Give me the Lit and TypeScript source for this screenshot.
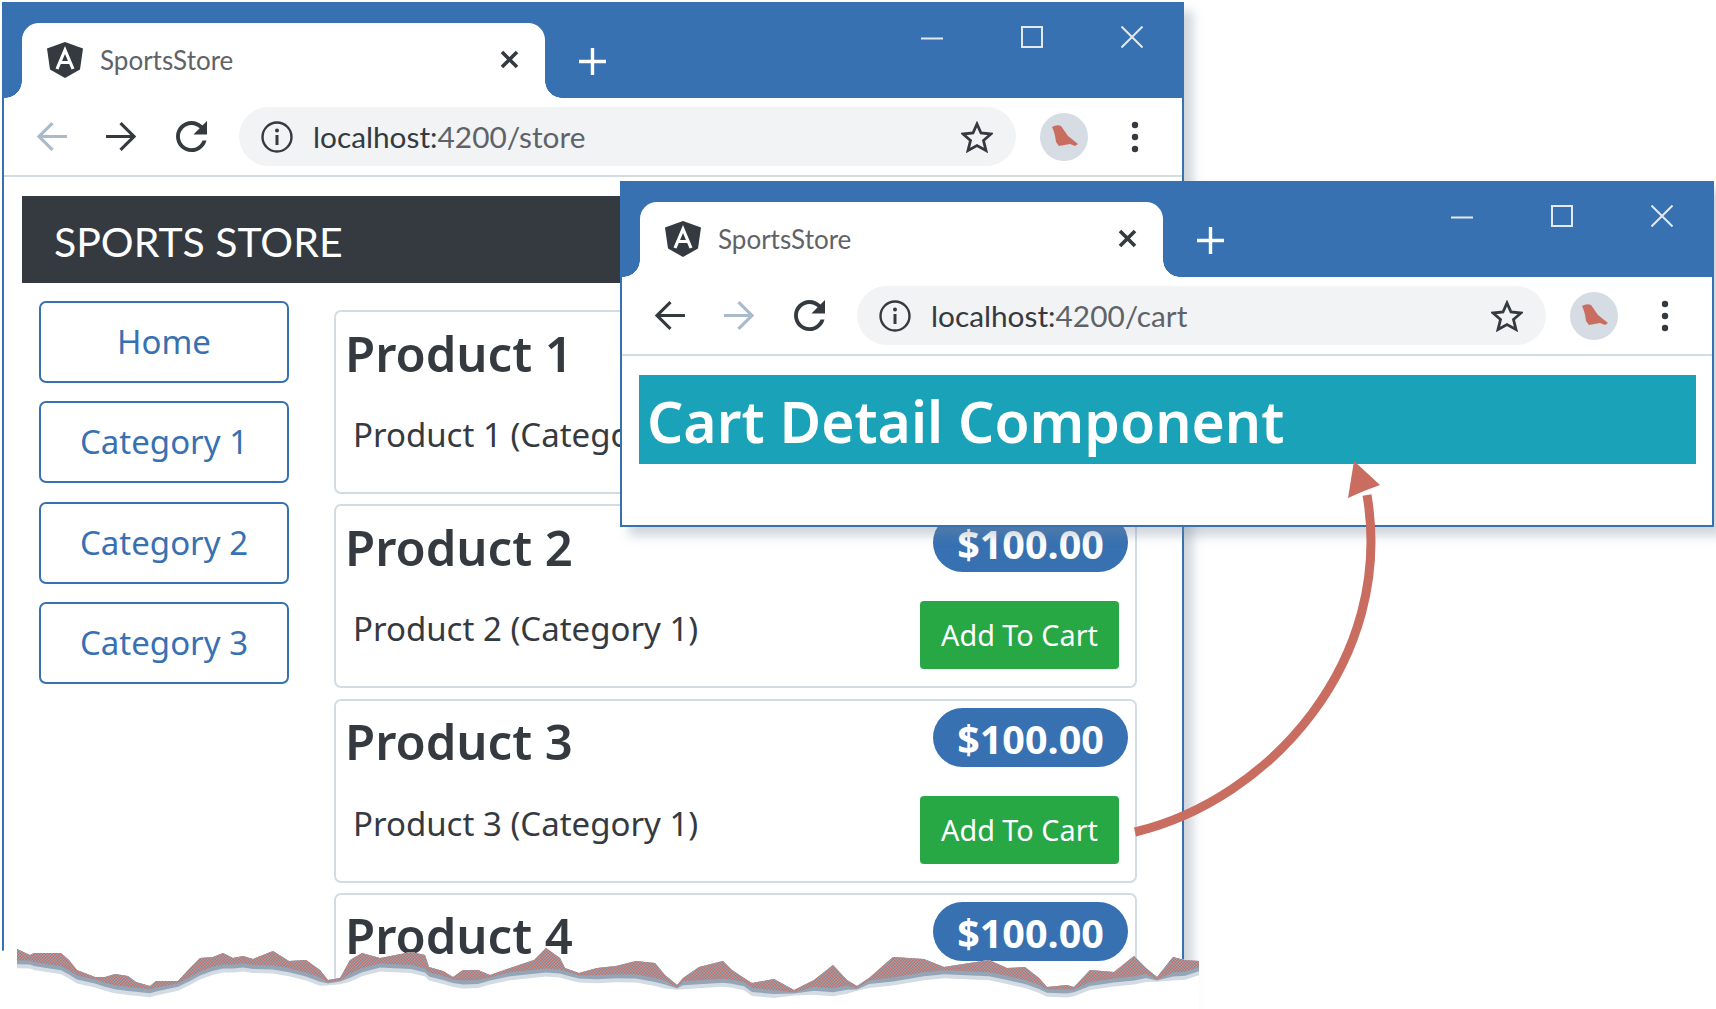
import { LitElement, html, css, svg } from "lit";
import { customElement, property } from "lit/decorators.js";

const TORN: number[][] = [
  [17, 949], [30, 955], [34, 953], [61, 953], [69, 960], [77, 970], [95, 977], [105, 977], [115, 974], [128, 976],
  [136, 982], [150, 986], [156, 981], [178, 981], [190, 968], [200, 958], [213, 957], [223, 953], [233, 958],
  [243, 956], [253, 959], [273, 951], [289, 961], [306, 960], [320, 970], [328, 980], [340, 978], [350, 960],
  [362, 953], [380, 958], [411, 952], [425, 955], [429, 967], [443, 971], [453, 977], [463, 970], [478, 970],
  [490, 975], [510, 968], [534, 960], [546, 948], [560, 958], [565, 968], [579, 973], [597, 968], [616, 966],
  [636, 961], [655, 963], [665, 975], [677, 985], [683, 978], [699, 967], [723, 961], [732, 970], [744, 978],
  [752, 983], [774, 979], [794, 990], [814, 980], [833, 965], [847, 980], [857, 986], [869, 978], [893, 957],
  [924, 959], [944, 967], [989, 960], [1007, 968], [1025, 967], [1039, 978], [1047, 987], [1067, 985],
  [1074, 987], [1090, 970], [1114, 972], [1134, 956], [1146, 968], [1157, 977], [1173, 957], [1185, 960], [1199, 961],
];

// smoothed lower edge of the paper tear, so the shading is thicker under the peaks
function lowerEdge(offset: number) {
  return TORN.map(([x, y], i) => {
    const near = TORN.slice(Math.max(0, i - 2), i + 3);
    const avg = near.reduce((sum, p) => sum + p[1], 0) / near.length;
    return [x, Math.max(y + offset * 0.3, avg + offset)];
  });
}

const band = (offset: number) =>
  [...TORN, ...lowerEdge(offset).reverse()].map((p) => p.join(",")).join(" ");

@customElement("browser-window")
class BrowserWindow extends LitElement {
  @property() url = "";
  @property({ type: Boolean }) forward = false;

  static styles = css`
    :host {
      display: flex;
      flex-direction: column;
      box-sizing: border-box;
      background: #fff;
      border: solid #3771b2;
      border-width: 0 2px 2px 2px;
      box-shadow: 9px 9px 10px rgba(120, 138, 155, 0.35);
      font-family: Lato, "Noto Sans", sans-serif;
    }
    .strip {
      display: flex;
      height: 96px;
      flex: none;
      background: #3771b2;
      margin: 0 -2px;
      padding-left: 20px;
      box-sizing: border-box;
    }
    .tab {
      position: relative;
      align-self: flex-end;
      width: 523px;
      height: 75px;
      box-sizing: border-box;
      background: #fff;
      border-radius: 17px 17px 0 0;
      display: flex;
      align-items: center;
      padding: 0 26px 2px 25px;
      color: #5f6368;
      font-size: 26px;
    }
    .tab::before,
    .tab::after {
      content: "";
      position: absolute;
      bottom: 0;
      width: 17px;
      height: 17px;
    }
    .tab::before {
      left: -17px;
      background: radial-gradient(circle at 0 0, transparent 16.5px, #fff 17px);
    }
    .tab::after {
      right: -17px;
      background: radial-gradient(circle at 100% 0, transparent 16.5px, #fff 17px);
    }
    .logo {
      width: 36px;
      height: 36px;
      margin-right: 17px;
    }
    .title {
      flex: 1;
    }
    .tab-close {
      width: 19px;
      height: 19px;
    }
    .plus {
      width: 27px;
      height: 27px;
      margin: 46px 0 0 34px;
    }
    .controls {
      display: flex;
      margin-left: auto;
      padding: 24px 41px 0 0;
      align-items: flex-start;
      gap: 78px;
    }
    .controls svg {
      width: 22px;
      height: 22px;
    }
    .toolbar {
      display: flex;
      flex: none;
      align-items: center;
      height: 79px;
      box-sizing: border-box;
      border-bottom: 2px solid #d3dbe3;
      padding: 0 43px 0 33px;
    }
    .nav {
      width: 31px;
      height: 31px;
      margin-right: 37px;
    }
    .nav.fwd {
      margin-right: 40px;
    }
    .nav.reload {
      margin-right: 32px;
    }
    .omni {
      flex: 1;
      height: 59px;
      display: flex;
      align-items: center;
      box-sizing: border-box;
      padding: 0 23px 0 22px;
      border-radius: 30px;
      background: #f1f3f5;
      font-size: 29.8px;
      color: #5f6368;
    }
    .info {
      width: 32px;
      height: 32px;
      margin-right: 20px;
    }
    .url {
      flex: 1;
    }
    .url b {
      font-weight: 400;
      color: #343a40;
    }
    .star {
      width: 32px;
      height: 32px;
    }
    .avatar {
      width: 48px;
      height: 48px;
      margin: 0 43px 0 24px;
    }
    .kebab {
      width: 8px;
      height: 32px;
    }
    .body {
      flex: 1;
      min-height: 0;
    }
  `;

  render() {
    const dark = "#343a40";
    const pale = "#a9bacb";
    return html`
      <div class="strip">
        <div class="tab">
          <svg class="logo" viewBox="0 0 36 36">
            <path d="M18 0 36 6.5 33 27.5 18 36 3 27.5 0 6.5Z" fill="${dark}" />
            <path d="M10 27 18 8 26 27M13 20.5H23" fill="none" stroke="#fff" stroke-width="3.2" />
          </svg>
          <span class="title">SportsStore</span>
          <svg class="tab-close" viewBox="0 0 19 19">
            <path d="M2 2 17 17M17 2 2 17" stroke="${dark}" stroke-width="3.6" />
          </svg>
        </div>
        <svg class="plus" viewBox="0 0 27 27">
          <path d="M13.5 0V27M0 13.5H27" stroke="#fff" stroke-width="3.4" />
        </svg>
        <div class="controls">
          <svg viewBox="0 0 22 22"><path d="M0 12.5H22" stroke="#e3e9ef" stroke-width="2" /></svg>
          <svg viewBox="0 0 22 22"><rect x="1" y="1" width="20" height="20" fill="none" stroke="#e3e9ef" stroke-width="2" /></svg>
          <svg viewBox="0 0 22 22"><path d="M0.5 0.5 21.5 21.5M21.5 0.5 0.5 21.5" stroke="#e3e9ef" stroke-width="2" /></svg>
        </div>
      </div>
      <div class="toolbar">
        <svg class="nav" viewBox="0 0 30 30">
          <path d="M29 15H2M15 2 2 15 15 28" fill="none" stroke="${this.forward ? pale : dark}" stroke-width="3" />
        </svg>
        <svg class="nav fwd" viewBox="0 0 30 30">
          <path d="M1 15H28M15 2 28 15 15 28" fill="none" stroke="${this.forward ? dark : pale}" stroke-width="3" />
        </svg>
        <svg class="nav reload" viewBox="4 4 16 16">
          <path fill="${dark}" d="M17.65 6.35C16.2 4.9 14.21 4 12 4c-4.42 0-7.99 3.58-7.99 8s3.57 8 7.99 8c3.73 0 6.84-2.55 7.73-6h-2.08c-.82 2.33-3.04 4-5.65 4-3.31 0-6-2.69-6-6s2.69-6 6-6c1.66 0 3.14.69 4.22 1.78L13 11h7V4l-2.35 2.35z" />
        </svg>
        <div class="omni">
          <svg class="info" viewBox="0 0 32 32">
            <circle cx="16" cy="16" r="14.5" fill="none" stroke="${dark}" stroke-width="2.4" />
            <path d="M16 14V24" stroke="${dark}" stroke-width="3" />
            <circle cx="16" cy="9.5" r="2" fill="${dark}" />
          </svg>
          <span class="url"><b>localhost:</b>${this.url}</span>
          <svg class="star" viewBox="0 0 32 32">
            <path d="M16 3 20 12 30 13 22.5 19.5 25 29.5 16 24.5 7 29.5 9.5 19.5 2 13 12 12Z" fill="none" stroke="${dark}" stroke-width="2.8" />
          </svg>
        </div>
        <svg class="avatar" viewBox="0 0 48 48">
          <circle cx="24" cy="24" r="24" fill="#d5dce3" />
          <path d="M12 14Q17 11 21 13L28 23 38 31 35 33 30 31 19 33 16 29Q15 20 12 14Z" fill="#c96d60" />
        </svg>
        <svg class="kebab" viewBox="0 0 8 32">
          <circle cx="4" cy="4" r="3.2" fill="${dark}" />
          <circle cx="4" cy="16" r="3.2" fill="${dark}" />
          <circle cx="4" cy="28" r="3.2" fill="${dark}" />
        </svg>
      </div>
      <div class="body"><slot></slot></div>
    `;
  }
}

@customElement("product-card")
class ProductCard extends LitElement {
  @property() name = "";

  static styles = css`
    :host {
      display: block;
      box-sizing: border-box;
      height: 184px;
      border: 2px solid #d3dbe3;
      border-radius: 7px;
      padding: 7px 7px 0 9px;
      font-family: "Noto Sans", sans-serif;
      color: #343a40;
    }
    .head,
    .row {
      display: flex;
      justify-content: space-between;
    }
    .head {
      align-items: center;
      height: 59px;
    }
    h4 {
      margin: 0;
      font-size: 49px;
      font-weight: 600;
      line-height: 59px;
      padding-top: 9px;
    }
    .price {
      box-sizing: border-box;
      width: 195px;
      height: 59px;
      border-radius: 30px;
      background: #3771b2;
      color: #fff;
      font-size: 39.5px;
      font-weight: 700;
      line-height: 62px;
      text-align: center;
    }
    .row {
      align-items: flex-start;
      margin-top: 29px;
      padding: 0 9px 0 8px;
    }
    .desc {
      font-size: 33px;
      line-height: 40px;
      padding-top: 8px;
    }
    .btn {
      width: 199px;
      height: 68px;
      border-radius: 4px;
      background: #28a745;
      color: #fff;
      font-size: 28.8px;
      line-height: 68px;
      text-align: center;
    }
  `;

  render() {
    return html`
      <div class="head">
        <h4>${this.name}</h4>
        <span class="price">$100.00</span>
      </div>
      <div class="row">
        <span class="desc">${this.name} (Category 1)</span>
        <span class="btn">Add To Cart</span>
      </div>
    `;
  }
}

@customElement("app-root")
class AppRoot extends LitElement {
  static styles = css`
    :host {
      display: block;
      position: relative;
      width: 1716px;
      height: 1009px;
      overflow: hidden;
      background: #fff;
    }
    .win {
      position: absolute;
    }
    .back {
      left: 2px;
      top: 2px;
      width: 1182px;
      height: 1000px;
    }
    .front {
      left: 620px;
      top: 181px;
      width: 1094px;
      height: 346px;
    }
    .navbar {
      margin: 19px 18px 0 18px;
      height: 87px;
      background: #343a40;
      color: #fff;
      font-family: Lato, sans-serif;
      font-size: 41px;
      line-height: 91px;
      padding-left: 32px;
    }
    .main {
      display: flex;
      gap: 45px;
      padding: 18px 45px 0 35px;
      font-family: "Noto Sans", sans-serif;
    }
    .side {
      display: flex;
      flex-direction: column;
      gap: 18.3px;
      width: 250px;
      flex: none;
    }
    .side span {
      height: 82px;
      box-sizing: border-box;
      border: 2px solid #3771b2;
      border-radius: 7px;
      color: #3771b2;
      font-size: 33px;
      line-height: 78px;
      text-align: center;
    }
    .cards {
      flex: 1;
      display: flex;
      flex-direction: column;
      gap: 10.3px;
      padding-top: 9px;
    }
    .teal {
      margin: 19px 16px 0 17px;
      height: 89px;
      background: #1aa2b8;
      color: #fff;
      font-family: "Noto Sans", sans-serif;
      font-size: 57px;
      font-weight: 600;
      line-height: 92px;
      padding-left: 8px;
    }
    .over {
      position: absolute;
      left: 0;
      top: 0;
    }
  `;

  render() {
    const closed = [[0, 951], ...TORN, [1199, 1009], [0, 1009]].map((p) => p.join(",")).join(" ");
    return html`
      <browser-window class="win back" url="4200/store" forward>
        <div class="navbar">SPORTS STORE</div>
        <div class="main">
          <div class="side">
            ${["Home", "Category 1", "Category 2", "Category 3"].map((c) => html`<span>${c}</span>`)}
          </div>
          <div class="cards">
            ${["Product 1", "Product 2", "Product 3", "Product 4"].map(
              (p) => html`<product-card name=${p}></product-card>`
            )}
          </div>
        </div>
      </browser-window>
      <svg class="over" width="1716" height="1009">
        ${svg`
          <defs>
            <pattern id="dots" width="3" height="3" patternUnits="userSpaceOnUse">
              <rect width="3" height="3" fill="#93a5b6" />
              <rect width="1.5" height="1.5" fill="#c96d60" />
              <rect x="1.5" y="1.5" width="1.5" height="1.5" fill="#c96d60" />
            </pattern>
          </defs>
          <polygon points=${closed} fill="#fff" />
          <polygon points=${band(16)} fill="#d3dbe3" />
          <polygon points=${band(12)} fill="#93a5b6" />
          <polygon points=${band(8)} fill="url(#dots)" />
        `}
      </svg>
      <browser-window class="win front" url="4200/cart">
        <div class="teal">Cart Detail Component</div>
      </browser-window>
      <svg class="over" width="1716" height="1009">
        <path d="M1135 832C1270 800 1395 660 1367 495" fill="none" stroke="#c96d60" stroke-width="9" />
        <path d="M1354 461 1380 485 1364 491 1348 498Z" fill="#c96d60" />
      </svg>
    `;
  }
}
